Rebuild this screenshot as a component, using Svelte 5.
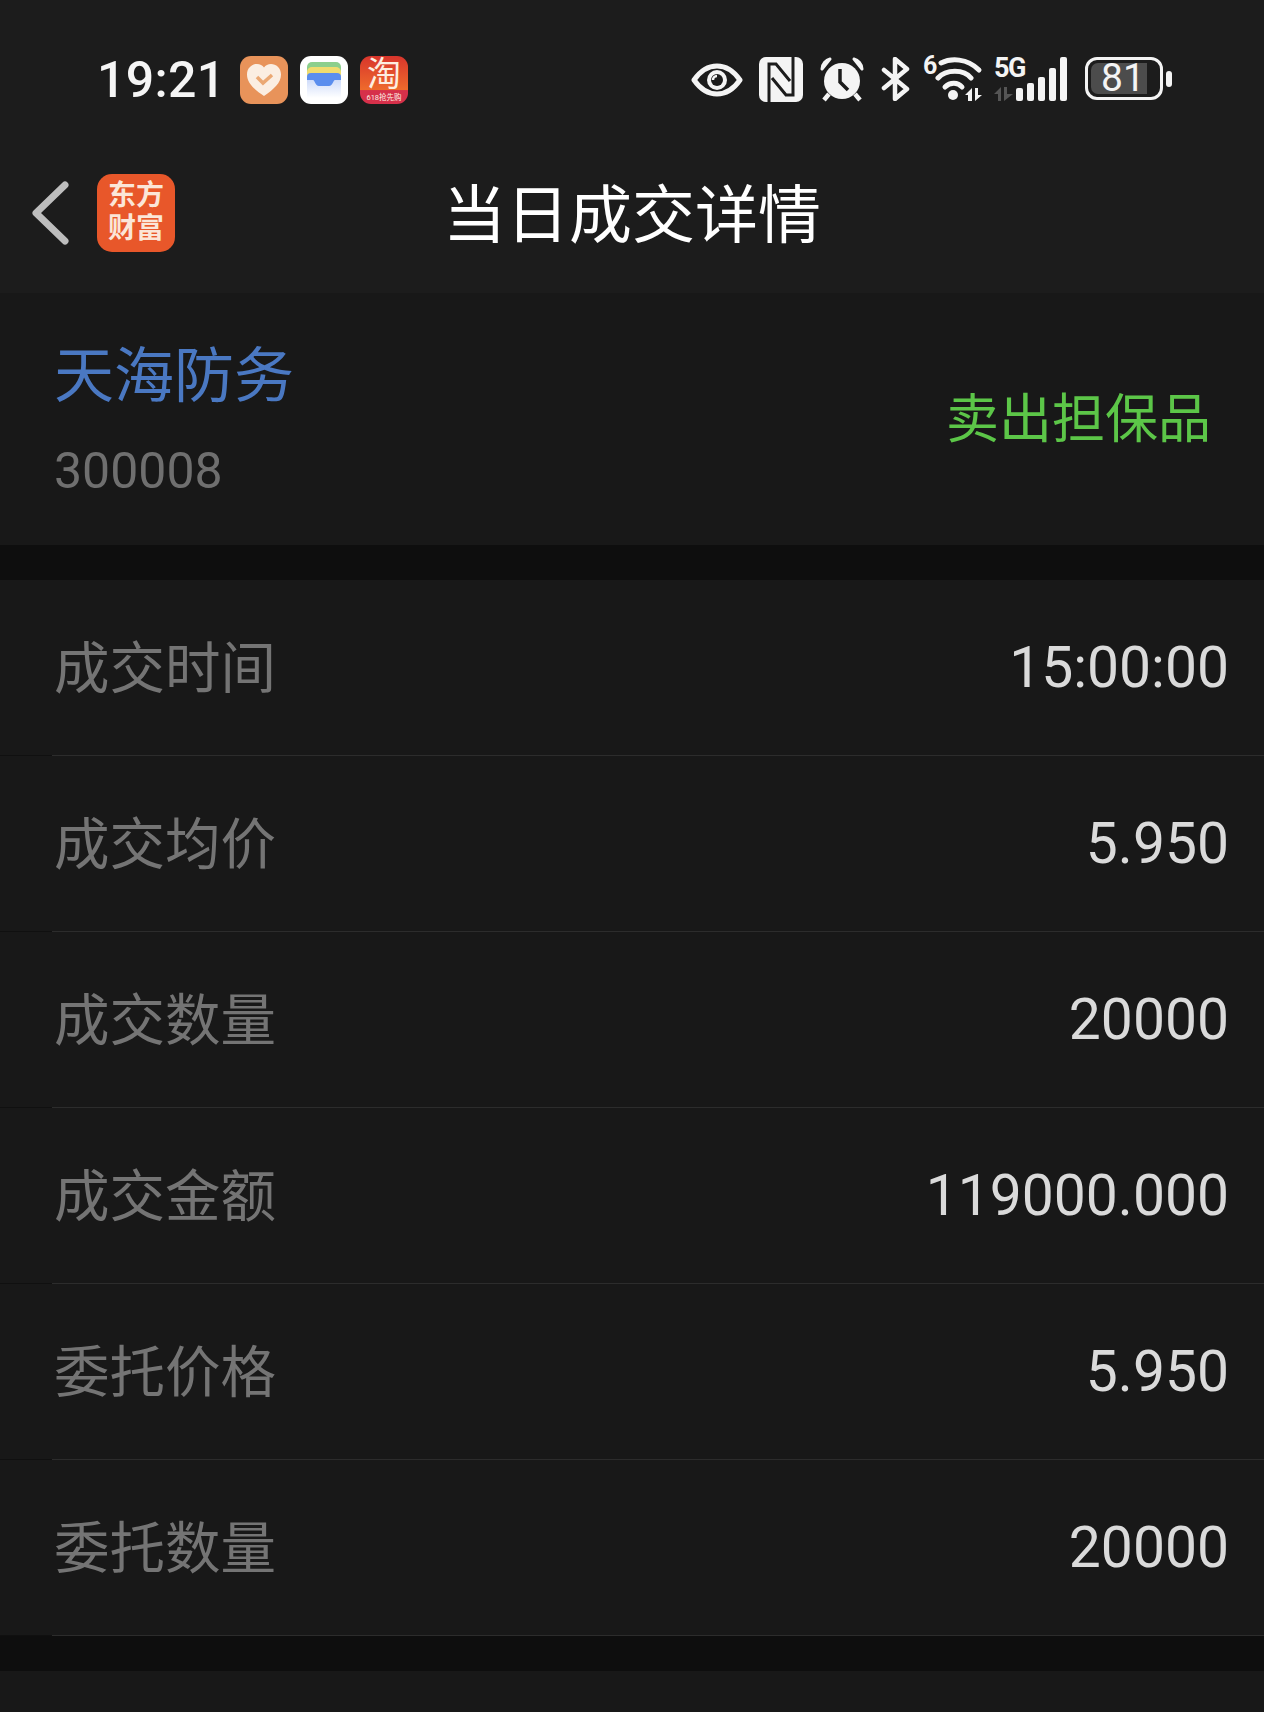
<script>
  const rows = [
    ["成交时间", "15:00:00"],
    ["成交均价", "5.950"],
    ["成交数量", "20000"],
    ["成交金额", "119000.000"],
    ["委托价格", "5.950"],
    ["委托数量", "20000"],
  ];
</script>

<div class="page">
  <div class="top">
    <div class="status">
      <span class="clock">19:21</span>
      <div class="apps">
        <svg class="app" viewBox="0 0 48 48">
          <rect width="48" height="48" rx="11" fill="#e8935a" />
          <path d="M24 40C14 33 7 27 7 18.500C7 12 12 8 17 8C20 8 22.500 9.500 24 11.500C25.500 9.500 28 8 31 8C36 8 41 12 41 18.500C41 27 34 33 24 40Z" fill="#fbeee2" />
          <path d="M17 21L23 27L32 19" fill="none" stroke="#eba873" stroke-width="3.500" />
        </svg>
        <svg class="app" viewBox="0 0 48 48">
          <defs>
            <linearGradient id="tray" x1="0" y1="0" x2="0" y2="1">
              <stop offset="0" stop-color="#cfdcfa" />
              <stop offset="1" stop-color="#ffffff" />
            </linearGradient>
          </defs>
          <rect width="48" height="48" rx="11" fill="#fff" />
          <rect x="7" y="6" width="34" height="20" rx="5" fill="#8ccf8c" />
          <rect x="7" y="11" width="34" height="15" rx="5" fill="#f0dc6e" />
          <rect x="7" y="17" width="34" height="14" rx="4" fill="#5b8eee" />
          <path d="M7 24H13C15 24 15 30 19 30H29C33 30 33 24 35 24H41V42H7Z" fill="url(#tray)" />
        </svg>
        <div class="taobao">
          <span class="tao">淘</span>
          <span class="promo">618抢先购</span>
        </div>
      </div>
      <div class="sys">
        <svg class="eye" viewBox="0 0 52 36">
          <path d="M3 18C10 8 17 4 26 4C35 4 42 8 49 18C42 28 35 32 26 32C17 32 10 28 3 18Z" fill="none" stroke="#f4f4f4" stroke-width="5" stroke-linejoin="round" />
          <circle cx="26" cy="18" r="10" fill="#f4f4f4" />
          <circle cx="26" cy="18" r="6" fill="#1c1c1c" />
          <path d="M22 18A4 4 0 0 1 26 14" fill="none" stroke="#f4f4f4" stroke-width="2.500" />
        </svg>
        <svg class="nfc" viewBox="0 0 44 45">
          <rect width="44" height="45" rx="7" fill="#f4f4f4" />
          <path d="M10 45V7H17L31 24" fill="none" stroke="#1c1c1c" stroke-width="3" />
          <path d="M34 0V38H27L13 21" fill="none" stroke="#1c1c1c" stroke-width="3" />
        </svg>
        <svg class="alarm" viewBox="0 0 44 45">
          <path d="M2 12C2 7 6 3 10 2Z M42 12C42 7 38 3 34 2Z" fill="#f4f4f4" stroke="#f4f4f4" stroke-width="3" stroke-linejoin="round" />
          <circle cx="22" cy="24" r="18" fill="#f4f4f4" />
          <path d="M9 37L4 43M35 37L40 43" stroke="#f4f4f4" stroke-width="4.500" />
          <path d="M20 12V25L28 33" fill="none" stroke="#1c1c1c" stroke-width="3.500" />
        </svg>
        <svg class="bt" viewBox="0 0 30 44">
          <path d="M3 13L26 32L14 42V2L26 12L3 31" fill="none" stroke="#f4f4f4" stroke-width="4.500" stroke-linejoin="round" stroke-linecap="round" />
        </svg>
        <div class="wifi">
          <span class="six">6</span>
          <svg viewBox="0 0 48 46">
            <path d="M6 7C16 2 32 2 44 14" fill="none" stroke="#f4f4f4" stroke-width="5" stroke-linecap="round" />
            <path d="M3 22C11 13 29 13 36 22" fill="none" stroke="#f4f4f4" stroke-width="5" stroke-linecap="round" />
            <path d="M10 31C15 26 23 26 27 31" fill="none" stroke="#f4f4f4" stroke-width="5" stroke-linecap="round" />
            <circle cx="18" cy="39" r="5" fill="#f4f4f4" />
            <path d="M37 32V45H33V39H30Z M40 32V45L47 39H43V32Z" fill="#f4f4f4" />
          </svg>
        </div>
        <div class="signal">
          <div class="net">
            <span class="five">5G</span>
            <svg viewBox="0 0 19 14"><path d="M0 7L7 0V14H4V7Z M10 0V14L19 7H13V0Z" fill="#555" /></svg>
          </div>
          <div class="bars">
            <i style="height:13px"></i>
            <i style="height:18px"></i>
            <i style="height:24px"></i>
            <i style="height:33px"></i>
            <i style="height:44px"></i>
          </div>
        </div>
        <div class="battery">
          <div class="shell"><div class="level"></div><span>81</span></div>
          <div class="nub"></div>
        </div>
      </div>
    </div>
    <div class="nav">
      <svg class="back" viewBox="0 0 40 64">
        <path d="M35 4L6 32L35 60" fill="none" stroke="#bdbdbd" stroke-width="7" stroke-linecap="round" stroke-linejoin="round" />
      </svg>
      <div class="logo"><span>东方</span><span>财富</span></div>
      <h1>当日成交详情</h1>
    </div>
  </div>

  <section class="stock">
    <div>
      <div class="name">天海防务</div>
      <div class="code">300008</div>
    </div>
    <div class="kind">卖出担保品</div>
  </section>

  <section class="list">
    {#each rows as [label, value]}
      <div class="row">
        <span class="label">{label}</span>
        <span class="value">{value}</span>
      </div>
    {/each}
  </section>

  <section class="tail"></section>
</div>

<style>
  :global(body) {
    margin: 0;
    background: #0e0e0e;
  }
  .page {
    width: 1264px;
    height: 1712px;
    overflow: hidden;
    font-family: "Roboto", "Noto Sans CJK SC", sans-serif;
    display: flex;
    flex-direction: column;
  }
  .top {
    height: 293px;
    background: #1c1c1c;
    flex: none;
  }
  .status {
    height: 133px;
    box-sizing: border-box;
    padding: 56px 92px 0 97px;
    display: flex;
    align-items: flex-start;
  }
  .clock {
    color: #f5f5f5;
    font-size: 50px;
    font-weight: 500;
    line-height: 48px;
    letter-spacing: 0.3px;
    width: 143px;
    flex: none;
  }
  .apps {
    display: flex;
    gap: 12px;
  }
  .app,
  .taobao {
    width: 48px;
    height: 48px;
    flex: none;
  }
  .taobao {
    border-radius: 11px;
    background: linear-gradient(#d8352c, #ee6a2c 70%, #d6304a 72%);
    position: relative;
    text-align: center;
    color: #fdeee0;
  }
  .tao {
    display: block;
    font-size: 34px;
    line-height: 36px;
  }
  .promo {
    position: absolute;
    left: 0;
    right: 0;
    bottom: 0;
    font-size: 7.500px;
    line-height: 13px;
    white-space: nowrap;
  }
  .sys {
    margin-left: auto;
    display: flex;
    align-items: flex-start;
  }
  .eye {
    width: 52px;
    height: 36px;
    margin-top: 6px;
  }
  .nfc {
    width: 44px;
    height: 45px;
    margin-left: 16px;
    margin-top: 1px;
  }
  .alarm {
    width: 44px;
    height: 45px;
    margin-left: 17px;
    margin-top: 1px;
  }
  .bt {
    width: 30px;
    height: 44px;
    margin-left: 17px;
    margin-top: 1px;
  }
  .wifi {
    position: relative;
    width: 60px;
    height: 46px;
    margin-left: 12px;
  }
  .wifi svg {
    position: absolute;
    right: 0;
    top: 0;
    width: 48px;
    height: 46px;
  }
  .six {
    position: absolute;
    left: 0;
    top: -3px;
    color: #f4f4f4;
    font-size: 25px;
    line-height: 26px;
    font-weight: 700;
  }
  .signal {
    display: flex;
    align-items: flex-end;
    margin-left: 11px;
    height: 45px;
  }
  .net {
    width: 22px;
    display: flex;
    flex-direction: column;
  }
  .five {
    color: #f4f4f4;
    font-size: 27px;
    line-height: 24px;
    font-weight: 700;
    letter-spacing: -1.500px;
    white-space: nowrap;
  }
  .net svg {
    width: 19px;
    height: 14px;
    margin-top: 7px;
  }
  .bars {
    display: flex;
    align-items: flex-end;
    gap: 4px;
  }
  .bars i {
    display: block;
    width: 7px;
    border-radius: 2px;
    background: #f4f4f4;
  }
  .battery {
    display: flex;
    align-items: center;
    margin-left: 18px;
    margin-top: 1px;
    height: 43px;
  }
  .shell {
    position: relative;
    box-sizing: border-box;
    width: 78px;
    height: 43px;
    border: 3px solid #f4f4f4;
    border-radius: 12px;
    text-align: center;
    color: #f4f4f4;
    font-size: 39px;
    line-height: 37px;
  }
  .shell span {
    position: relative;
    display: block;
    padding-right: 2px;
  }
  .level {
    position: absolute;
    left: 3px;
    top: 3px;
    bottom: 3px;
    width: 56px;
    background: #4c4c4c;
    border-radius: 7px 0 0 7px;
  }
  .nub {
    width: 6px;
    height: 16px;
    margin-left: 3px;
    border-radius: 3px;
    background: #f4f4f4;
  }
  .nav {
    position: relative;
    height: 160px;
    display: flex;
    align-items: center;
    padding-left: 30px;
  }
  .back {
    width: 40px;
    height: 64px;
    flex: none;
  }
  .logo {
    width: 78px;
    height: 78px;
    margin-left: 27px;
    box-sizing: border-box;
    padding-top: 5px;
    border-radius: 15px;
    background: #e8572a;
    color: #fbe6d8;
    font-size: 28px;
    line-height: 33px;
    font-weight: 700;
    text-align: center;
  }
  .logo span {
    display: block;
    white-space: nowrap;
  }
  h1 {
    position: absolute;
    left: 0;
    right: 0;
    margin: 6px 0 0;
    text-align: center;
    color: #fff;
    font-size: 63px;
    font-weight: 400;
    line-height: 80px;
  }
  section {
    background: #181818;
    flex: none;
  }
  .stock {
    height: 252px;
    box-sizing: border-box;
    padding: 0 53px 0 54px;
    display: flex;
    justify-content: space-between;
    align-items: center;
  }
  .name {
    color: #4a78c2;
    font-size: 60px;
    line-height: 80px;
  }
  .code {
    color: #6f6f6f;
    font-size: 50px;
    line-height: 60px;
    margin-top: 24px;
  }
  .kind {
    color: #5cc648;
    font-size: 53px;
    line-height: 70px;
    margin-top: 2px;
  }
  .list {
    margin-top: 35px;
  }
  .row {
    height: 176px;
    box-sizing: border-box;
    padding: 0 35px 0 54px;
    display: flex;
    justify-content: space-between;
    align-items: center;
    border-bottom: 1px solid;
    border-image: linear-gradient(to right, #101010 53px, #2c2c2c 53px) 1;
  }
  .label {
    color: #747474;
    font-size: 55.500px;
    margin-bottom: 8px;
  }
  .value {
    color: #dadada;
    font-size: 57px;
  }
  .tail {
    margin-top: 35px;
    height: 42px;
  }
</style>
